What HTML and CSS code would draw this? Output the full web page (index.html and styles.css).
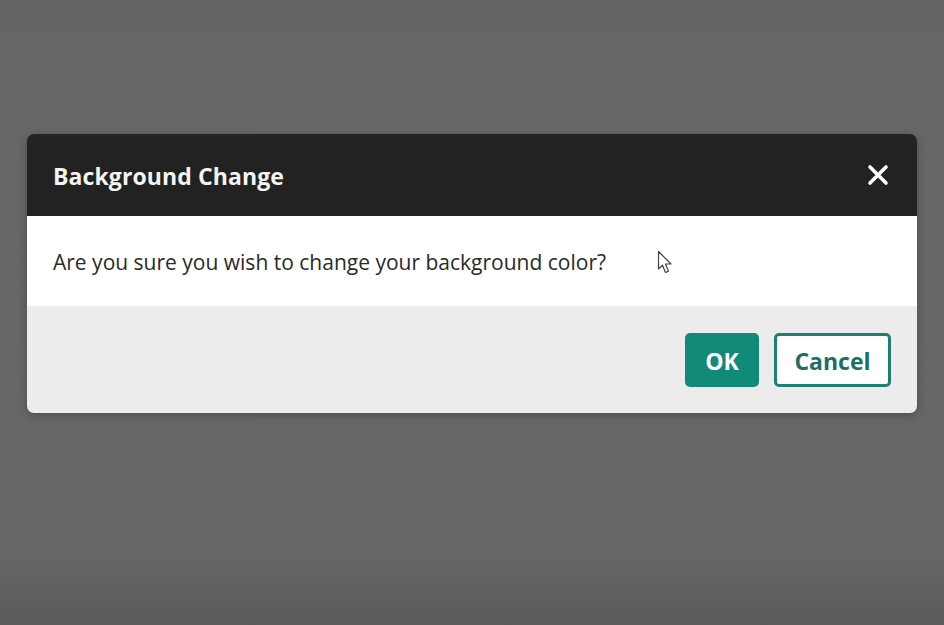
FILE: index.html
```html
<!DOCTYPE html>
<html>
<head>
<meta charset="utf-8">
<link rel="stylesheet" href="styles.css">
</head>
<body>
<div class="overlay">
  <div class="dialog">
    <div class="dialog-header">
      <h1 class="dialog-title">Background Change</h1>
      <button class="close-btn" aria-label="Close">
        <svg width="22" height="22" viewBox="0 0 22 22"><path d="M3 3 L19 19 M19 3 L3 19" stroke="#fff" stroke-width="3.6" stroke-linecap="round"/></svg>
      </button>
    </div>
    <div class="dialog-body">
      <p class="message">Are you sure you wish to change your background color?</p>
      <svg class="cursor" width="18" height="26" viewBox="0 0 18 26"><path d="M1.5 1.5 L1.5 19 L5.5 15.2 L8.5 22.5 L11.5 21.2 L8.5 14 L14 14 Z" fill="#fff" stroke="#444" stroke-width="1.2" stroke-linejoin="round"/></svg>
    </div>
    <div class="dialog-footer">
      <button class="btn btn-primary">OK</button>
      <button class="btn btn-secondary">Cancel</button>
    </div>
  </div>
</div>
</body>
</html>
```

FILE: styles.css
```css
html, body {
  margin: 0;
  padding: 0;
  height: 100%;
}
body {
  background: linear-gradient(to bottom, #646464 0px, #676767 60px, #666666 560px, #5a5a5a 625px);
  font-family: "Open Sans", "Noto Sans", sans-serif;
}
.overlay {
  height: 625px;
  display: flex;
  flex-direction: column;
  padding: 134px 27px 0 27px;
  box-sizing: border-box;
}
.dialog {
  width: 890px;
  border-radius: 7px;
  overflow: hidden;
  box-shadow: 0 2px 10px rgba(0,0,0,0.25);
  display: flex;
  flex-direction: column;
}
.dialog-header {
  height: 82px;
  background: #222222;
  display: flex;
  align-items: center;
  justify-content: space-between;
  padding: 0 28px 0 26px;
}
.dialog-title {
  margin: 0;
  color: #f4f4f4;
  font-size: 23px;
  font-weight: 700;
  letter-spacing: 0.1px;
  padding-top: 1px;
}
.close-btn {
  background: none;
  border: 0;
  padding: 0;
  width: 22px;
  height: 22px;
  display: flex;
  margin-top: -1px;
}
.dialog-body {
  height: 90px;
  background: #ffffff;
  display: flex;
  align-items: center;
  padding: 0 26px;
  position: relative;
}
.message {
  margin: 0;
  font-size: 21px;
  color: #2a2a2a;
  padding-top: 1px;
}
.cursor {
  position: absolute;
  left: 630px;
  top: 34px;
}
.dialog-footer {
  height: 107px;
  background: #ececec;
  display: flex;
  justify-content: flex-end;
  align-items: flex-start;
  gap: 15px;
  padding: 27px 26px 0 0;
  box-sizing: border-box;
}
.btn {
  height: 54px;
  border-radius: 5px;
  font-family: "Open Sans", "Noto Sans", sans-serif;
  font-size: 23px;
  font-weight: 700;
  cursor: pointer;
  padding: 2px 0 0 0;
}
.btn-primary {
  width: 74px;
  background: #128a7a;
  border: 2px solid #128a7a;
  color: #ffffff;
}
.btn-secondary {
  width: 117px;
  background: #ffffff;
  border: 3px solid #1e7f72;
  color: #1b6f65;
}
```
